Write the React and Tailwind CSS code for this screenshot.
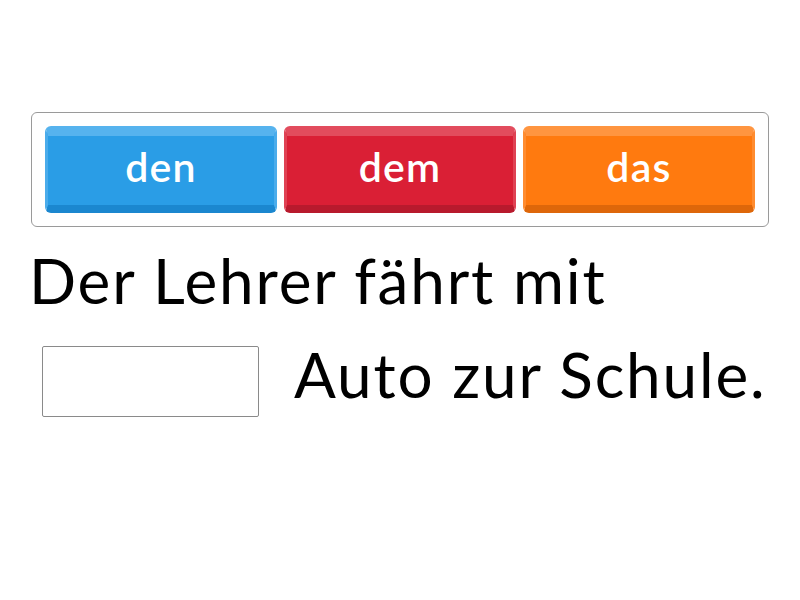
export default function App() {
  const options = [
    { label: "den", face: "bg-[#2a9de6]", edge: "border-t-[#56b3ee] border-x-[#4aaceb] border-b-[#1b87cf]" },
    { label: "dem", face: "bg-[#da1f35]", edge: "border-t-[#e24c5d] border-x-[#df4254] border-b-[#b81a2d]" },
    { label: "das", face: "bg-[#ff7a0f]", edge: "border-t-[#ff9540] border-x-[#ff8c30] border-b-[#de670a]" },
  ];

  return (
    <div className="w-[800px] h-[600px] bg-white font-['Lato',sans-serif] text-black">
      <div className="pt-[112px] px-[31px]">
        {/* answer choices */}
        <div className="w-[738px] h-[115px] border border-[#9a9a9a] rounded-md flex gap-[7px] px-[13px] pt-[13px]">
          {options.map((o) => (
            <div
              key={o.label}
              className={`w-[232px] h-[87px] rounded-md border-t-[10px] border-x-[3px] border-b-[8px] ${o.face} ${o.edge} flex items-center justify-center text-white text-[41px] font-semibold tracking-[0.03em] leading-none pb-[8px]`}
            >
              {o.label}
            </div>
          ))}
        </div>

        {/* sentence */}
        <div className="text-[62px] tracking-[0.03em] leading-none mt-[22px] -ml-[2px]">Der Lehrer fährt mit</div>
        <div className="flex items-center mt-[35px]">
          <div className="ml-[11px] w-[217px] h-[71px] border border-[#8a8a8a] rounded-[2px]" />
          <div className="text-[62px] tracking-[0.03em] leading-none ml-[35px] -mt-[16px]">Auto zur Schule.</div>
        </div>
      </div>
    </div>
  );
}
